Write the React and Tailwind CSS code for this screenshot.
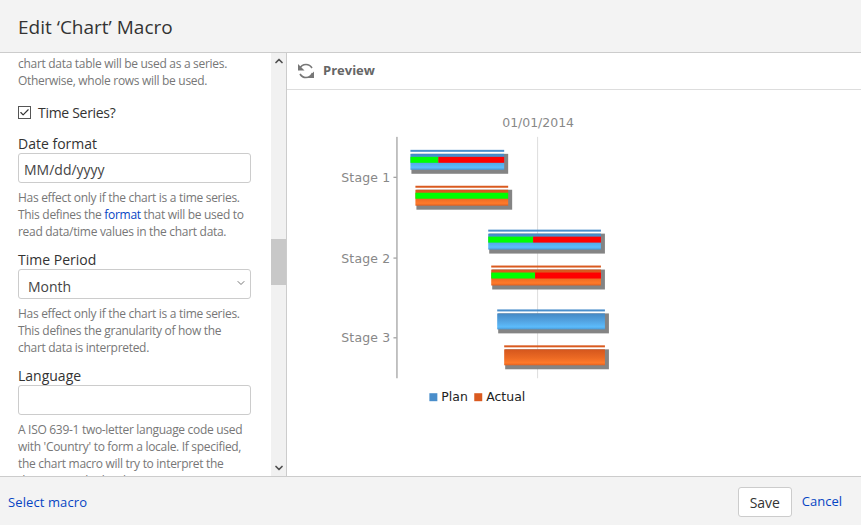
import { Check, ChevronUp, ChevronDown } from 'lucide-react';

const PLAN = '#4a8ecb';
const ACTUAL = '#da5a1f';

const bars = [
  { fill: 'url(#planFill)', line: PLAN, x1: 410, x2: 504, y: 150, green: 438 },
  { fill: 'url(#actualFill)', line: ACTUAL, x1: 415, x2: 508, y: 186, green: 508 },
  { fill: 'url(#planFill)', line: PLAN, x1: 488, x2: 601, y: 230, green: 533 },
  { fill: 'url(#actualFill)', line: ACTUAL, x1: 491, x2: 601, y: 266, green: 535 },
  { fill: 'url(#planFill)', line: PLAN, x1: 497, x2: 605, y: 310 },
  { fill: 'url(#actualFill)', line: ACTUAL, x1: 504, x2: 605, y: 346 },
];

const stages = [
  { label: 'Stage 1', y: 177 },
  { label: 'Stage 2', y: 258 },
  { label: 'Stage 3', y: 338 },
];

const chartFont = { fontFamily: '"DejaVu Sans", sans-serif' };

const RefreshIcon = () => (
  <svg width="16" height="16" viewBox="0 0 16 16" fill="none" className="text-[#777]">
    <path d="M1.5 6 C3 2.5 5 1.5 8 1.5 C10.5 1.5 12.5 2.5 14 5" stroke="currentColor" strokeWidth="1.6" />
    <path d="M0 1 L0 7.5 L6.5 7.5 Z" fill="currentColor" />
    <path d="M2 11 C3.5 13.5 5.5 14.5 8 14.5 C11 14.5 13 13.5 14.5 10" stroke="currentColor" strokeWidth="1.6" />
    <path d="M16 15 L16 8.5 L9.5 15 Z" fill="currentColor" />
  </svg>
);

const Chart = () => (
  <svg width="574" height="387" viewBox="287 90 574 387" className="block">
    <defs>
      <linearGradient id="planFill" x1="0" y1="0" x2="0" y2="1">
        <stop offset="0" stopColor="#4488c4" />
        <stop offset="0.55" stopColor="#55a8e6" />
        <stop offset="0.85" stopColor="#5cbcfc" />
        <stop offset="1" stopColor="#4a98d4" />
      </linearGradient>
      <linearGradient id="actualFill" x1="0" y1="0" x2="0" y2="1">
        <stop offset="0" stopColor="#d4561d" />
        <stop offset="0.55" stopColor="#ec6a24" />
        <stop offset="0.85" stopColor="#ff7a2a" />
        <stop offset="1" stopColor="#e06020" />
      </linearGradient>
    </defs>

    <text x="538" y="127" textAnchor="middle" fontSize="12.5" fill="#888" style={chartFont}>
      01/01/2014
    </text>

    <line x1="537.5" y1="137" x2="537.5" y2="379" stroke="#ddd" />
    <line x1="396.5" y1="137" x2="396.5" y2="379" stroke="#888" />

    {stages.map((s) => (
      <g key={s.label}>
        <line x1="393" y1={s.y + 0.5} x2="396" y2={s.y + 0.5} stroke="#888" />
        <text
          x="390"
          y={s.y + 5}
          textAnchor="end"
          fontSize="12.5"
          letterSpacing="0.2"
          fill="#888"
          style={chartFont}
        >
          {s.label}
        </text>
      </g>
    ))}

    {bars.map((b) => (
      <g key={b.y}>
        <rect x={b.x1} y={b.y} width={b.x2 - b.x1} height="2" fill={b.line} />
        <rect x={b.x1 + 1} y={b.y + 4} width={b.x2 - b.x1 + 3} height="20" fill="#848484" />
        <rect x={b.x1} y={b.y + 4} width={b.x2 - b.x1} height="16" fill={b.fill} />
        {b.green && (
          <>
            <rect x={b.x1} y={b.y + 7} width={b.green - b.x1} height="6" fill="#00ff00" />
            <rect x={b.green} y={b.y + 7} width={b.x2 - b.green} height="6" fill="#ff0000" />
          </>
        )}
      </g>
    ))}

    <rect x="429" y="394" width="8" height="8" fill={PLAN} />
    <text x="441" y="402" fontSize="12.5" fill="#222" style={chartFont}>
      Plan
    </text>
    <rect x="474" y="394" width="8" height="8" fill={ACTUAL} />
    <text x="486" y="402" fontSize="12.5" fill="#222" style={chartFont}>
      Actual
    </text>
  </svg>
);

const Help = ({ children }) => (
  <p className="mt-[6px] text-[12px] leading-[17px] tracking-[-0.3px] text-[#777]">{children}</p>
);

const Field = ({ label, children }) => (
  <div className="mt-[10px]">
    <label className="block text-[14px] leading-[19px] text-[#333]">{label}</label>
    {children}
  </div>
);

const inputClass =
  'block w-[233px] h-[30px] rounded-[3px] border border-[#ccc] bg-white px-[5px] pt-[3px] text-[14px] text-[#444] outline-none';

export default function App() {
  return (
    <div
      className="w-[861px] h-[525px] flex flex-col overflow-hidden bg-white"
      style={{ fontFamily: '"Open Sans", sans-serif' }}
    >
      <header className="h-[53px] shrink-0 flex items-center px-[18px] pt-[2px] bg-[#f3f3f3] border-b border-[#ccc]">
        <h1 className="text-[19px] text-[#333] font-normal">Edit ‘Chart’ Macro</h1>
      </header>

      <div className="flex-1 flex min-h-0">
        <div className="w-[287px] shrink-0 flex border-r border-[#ccc]">
          <div className="w-[271px] overflow-hidden pl-[18px] pt-[2px]">
            <p className="text-[12px] leading-[17px] tracking-[-0.3px] text-[#777]">
              chart data table will be used as a series.
              <br />
              Otherwise, whole rows will be used.
            </p>

            <label className="mt-[14px] pb-[2px] flex items-center gap-[7px] text-[14px] leading-[19px] tracking-[-0.3px] text-[#333]">
              <span className="w-[13px] h-[13px] flex items-center justify-center border border-[#555] bg-white">
                <Check size={11} strokeWidth={2.5} className="text-[#333]" />
              </span>
              Time Series?
            </label>

            <Field label="Date format">
              <input className={inputClass} defaultValue="MM/dd/yyyy" />
            </Field>
            <Help>
              Has effect only if the chart is a time series.
              <br />
              This defines the <a className="text-[#0645c4]">format</a> that will be used to
              <br />
              read data/time values in the chart data.
            </Help>

            <Field label="Time Period">
              <div className="relative w-[233px]">
                <select
                  className={`${inputClass} appearance-none pl-[9px] pt-[5px]`}
                  defaultValue="Month"
                >
                  <option>Month</option>
                </select>
                <ChevronDown
                  size={12}
                  strokeWidth={2}
                  className="absolute right-[4px] top-[8px] text-[#777]"
                />
              </div>
            </Field>
            <Help>
              Has effect only if the chart is a time series.
              <br />
              This defines the granularity of how the
              <br />
              chart data is interpreted.
            </Help>

            <Field label="Language">
              <input className={inputClass} />
            </Field>
            <Help>
              A ISO 639-1 two-letter language code used
              <br />
              with 'Country' to form a locale. If specified,
              <br />
              the chart macro will try to interpret the
              <br />
              dates using the locale given.
            </Help>
          </div>

          <div className="w-[15px] bg-[#f1f1f1] flex flex-col items-center">
            <ChevronUp size={12} strokeWidth={3.5} className="mt-[2px] text-[#505050] shrink-0" />
            <div className="flex-1 w-full pt-[172px]">
              <div className="h-[46px] bg-[#c8c8c8]" />
            </div>
            <ChevronDown size={12} strokeWidth={3.5} className="mb-[2px] text-[#505050] shrink-0" />
          </div>
        </div>

        <div className="flex-1 flex flex-col min-w-0">
          <div className="h-[37px] shrink-0 flex items-center gap-[9px] pl-[11px] border-b border-[#ddd]">
            <RefreshIcon />
            <span className="text-[13px] font-bold text-[#666]">Preview</span>
          </div>
          <Chart />
        </div>
      </div>

      <footer className="h-[49px] shrink-0 flex items-center justify-between pl-[8px] pr-[19px] pt-[2px] bg-[#f3f3f3] border-t border-[#ccc] text-[13px]">
        <a className="mt-[1px] tracking-[0.1px] text-[#0645c4]">Select macro</a>
        <div className="flex items-center gap-[10px]">
          <button className="w-[54px] h-[30px] rounded-[3px] border border-[#ccc] bg-white text-[14px] text-[#333]">
            Save
          </button>
          <a className="text-[#0645c4]">Cancel</a>
        </div>
      </footer>
    </div>
  );
}
